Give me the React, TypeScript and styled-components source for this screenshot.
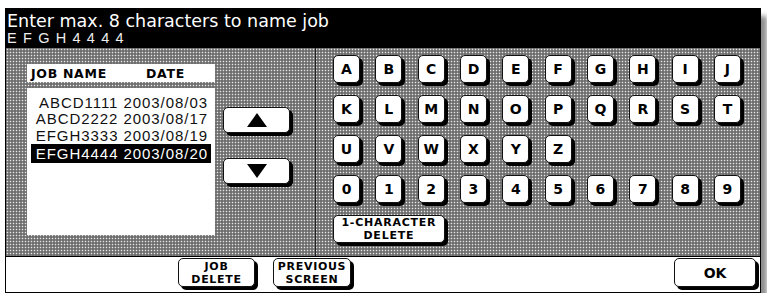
import React from "react";
import styled, { createGlobalStyle } from "styled-components";

const Global = createGlobalStyle`
  html, body { margin: 0; padding: 0; background: #fff; }
  body { font-family: "DejaVu Sans", sans-serif; }
  * { box-sizing: border-box; }
`;

const Screen = styled.div`
  margin: 8px 0 0 5px;
  width: 756px;
  border: 1px solid #000;
  display: flex;
  flex-direction: column;
  box-shadow: 7px 7px 5px -1px rgba(0, 0, 0, 0.45);
  background: #fff;
`;

const TitleBar = styled.div`
  height: 39px;
  background: #000;
  color: #fff;
  padding: 3px 0 0 1px;
  display: flex;
  flex-direction: column;
`;

const Title = styled.div`
  font-family: "DejaVu Sans", sans-serif;
  font-size: 17.5px;
  line-height: 19px;
  white-space: nowrap;
`;

const Entry = styled.div`
  font-family: "Liberation Sans", sans-serif;
  font-size: 14.5px;
  line-height: 14px;
  letter-spacing: 6.3px;
  color: #eee;
`;

const Main = styled.div`
  height: 208px;
  display: flex;
  background-color: #858585;
  background-image: radial-gradient(circle, #e8e8e8 0.6px, transparent 0.9px),
    radial-gradient(circle, #2a2a2a 0.6px, transparent 0.9px);
  background-size: 3px 3px, 3px 3px;
  background-position: 0 0, 1.5px 1.5px;
`;

const LeftPanel = styled.div`
  width: 310px;
  border-right: 1px solid #222;
  padding: 16px 0 0 21px;
  display: flex;
  align-items: flex-start;
`;

const TableCol = styled.div`
  width: 188px;
  display: flex;
  flex-direction: column;
  gap: 6px;
`;

const TableHeader = styled.div`
  height: 18px;
  background: #fff;
  display: flex;
  align-items: center;
  font-family: "DejaVu Sans", sans-serif;
  font-weight: bold;
  font-size: 12.5px;
  letter-spacing: 0.7px;
  padding-left: 4px;
`;

const HeaderCell = styled.span<{ $w: number }>`
  width: ${(p) => p.$w}px;
`;

const ListBox = styled.div`
  height: 147px;
  background: #fff;
  padding: 6px 4px 0 4px;
  display: flex;
  flex-direction: column;
`;

const Row = styled.div<{ $sel?: boolean }>`
  height: ${(p) => (p.$sel ? 19 : 16.5)}px;
  display: flex;
  align-items: center;
  justify-content: flex-end;
  gap: 5px;
  padding-right: 3px;
  font-family: "Liberation Sans", sans-serif;
  font-size: 15px;
  letter-spacing: 0.95px;
  background: ${(p) => (p.$sel ? "#000" : "transparent")};
  color: ${(p) => (p.$sel ? "#fff" : "#111")};
`;

const ArrowCol = styled.div`
  margin-left: 8px;
  padding-top: 43px;
  display: flex;
  flex-direction: column;
  gap: 25px;
`;

const KeyBase = styled.button`
  background: #fff;
  border: 1.3px solid #111;
  border-radius: 5px;
  box-shadow: 3px 3px 0 #000;
  padding: 0;
  margin: 0;
  color: #000;
  font-family: "DejaVu Sans", sans-serif;
  font-weight: bold;
  display: flex;
  align-items: center;
  justify-content: center;
  cursor: pointer;
`;

const ArrowButton = styled(KeyBase)`
  width: 67px;
  height: 26px;
`;

const RightPanel = styled.div`
  flex: 1;
  padding: 7px 0 0 17px;
`;

const KeyGrid = styled.div`
  display: grid;
  grid-template-columns: repeat(10, 27px);
  grid-auto-rows: 28px;
  column-gap: 15.33px;
  row-gap: 12px;
`;

const Key = styled(KeyBase)`
  font-size: 14px;
`;

const Spacer = styled.div`
  grid-column: span 4;
`;

const Line = styled.span`
  display: block;
  line-height: 13px;
  height: 13px;
`;

const WideKey = styled(KeyBase)`
  grid-column: span 3;
  flex-direction: column;
  font-size: 11px;
  letter-spacing: 0.75px;
  white-space: nowrap;
`;

const BottomBar = styled.div`
  height: 36px;
  border-top: 1px solid #000;
  background: #fff;
  display: flex;
  align-items: flex-start;
  padding: 1px 4px 0 172px;
`;

const BarButton = styled(KeyBase)<{ $w: number; $ml?: number }>`
  width: ${(p) => p.$w}px;
  height: 29px;
  margin-left: ${(p) => p.$ml ?? 0}px;
  flex-direction: column;
  font-size: 11px;
  letter-spacing: 0.7px;
  white-space: nowrap;
`;

const OkButton = styled(KeyBase)`
  width: 82px;
  height: 29px;
  margin-left: auto;
  font-size: 14px;
`;

const Tri = ({ up }: { up?: boolean }) => (
  <svg width="20" height="14" viewBox="0 0 20 14">
    {up ? (
      <polygon points="10,0 20,14 0,14" fill="#000" />
    ) : (
      <polygon points="0,0 20,0 10,14" fill="#000" />
    )}
  </svg>
);

const jobs = [
  ["ABCD1111", "2003/08/03"],
  ["ABCD2222", "2003/08/17"],
  ["EFGH3333", "2003/08/19"],
  ["EFGH4444", "2003/08/20"],
];

const letters = "ABCDEFGHIJKLMNOPQRSTUVWXYZ".split("");
const digits = "0123456789".split("");

export default function App() {
  return (
    <>
      <Global />
      <Screen>
        <TitleBar>
          <Title>Enter max. 8 characters to name job</Title>
          <Entry>EFGH4444</Entry>
        </TitleBar>
        <Main>
          <LeftPanel>
            <TableCol>
              <TableHeader>
                <HeaderCell $w={115}>JOB NAME</HeaderCell>
                <HeaderCell $w={60}>DATE</HeaderCell>
              </TableHeader>
              <ListBox>
                {jobs.map(([n, d], i) => (
                  <Row key={n} $sel={i === 3}>
                    <span>{n}</span>
                    <span>{d}</span>
                  </Row>
                ))}
              </ListBox>
            </TableCol>
            <ArrowCol>
              <ArrowButton aria-label="up">
                <Tri up />
              </ArrowButton>
              <ArrowButton aria-label="down">
                <Tri />
              </ArrowButton>
            </ArrowCol>
          </LeftPanel>
          <RightPanel>
            <KeyGrid>
              {letters.map((l) => (
                <Key key={l}>{l}</Key>
              ))}
              <Spacer />
              {digits.map((d) => (
                <Key key={d}>{d}</Key>
              ))}
              <WideKey>
                <Line>1-CHARACTER</Line>
                <Line>DELETE</Line>
              </WideKey>
            </KeyGrid>
          </RightPanel>
        </Main>
        <BottomBar>
          <BarButton $w={77}>
            <Line>JOB</Line>
            <Line>DELETE</Line>
          </BarButton>
          <BarButton $w={78} $ml={18}>
            <Line>PREVIOUS</Line>
            <Line>SCREEN</Line>
          </BarButton>
          <OkButton>OK</OkButton>
        </BottomBar>
      </Screen>
    </>
  );
}
